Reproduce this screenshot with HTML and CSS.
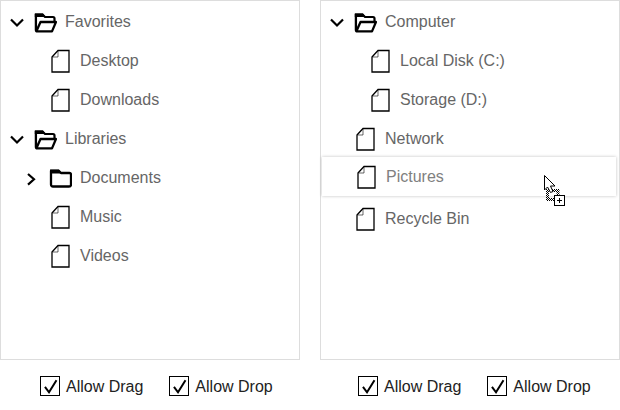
FILE: index.html
```html
<!DOCTYPE html>
<html>
<head>
  <meta charset="UTF-8">
  <title>Tree drag and drop</title>
  <link rel="stylesheet" href="styles.css">
</head>
<body>
  <svg class="defs" width="0" height="0">
    <symbol id="i-chevron-down" viewBox="0 0 16 16">
      <path d="M3 5.5 L9 11.5 L15 5.5" fill="none" stroke="#000" stroke-width="2.2"/>
    </symbol>
    <symbol id="i-chevron-right" viewBox="0 0 16 16">
      <path d="M5 4 L11 9.3 L5 14.6" fill="none" stroke="#000" stroke-width="2.2"/>
    </symbol>
    <symbol id="i-open" viewBox="0 0 24 24">
      <path d="M2.8 5 H10 L12 7 H20 Q21.5 7 21.5 8.5 V11" fill="none" stroke="#000" stroke-width="2.2"/>
      <path d="M1.8 3.2 H10 L12.5 7 H1.8 Z" fill="#000"/>
      <path d="M2.9 4 V20 Q2.9 21.4 4.4 21.4 H19 L23 12 H7.5 L3.5 21" fill="none" stroke="#000" stroke-width="2.3" stroke-linejoin="round"/>
    </symbol>
    <symbol id="i-closed" viewBox="0 0 24 24">
      <path d="M3 5 H11 L13 7 H21.5 Q23 7 23 8.5 V18.5 Q23 20.5 21 20.5 H5 Q3 20.5 3 18.5 Z" fill="none" stroke="#000" stroke-width="2.3" stroke-linejoin="round"/>
      <path d="M2 3.5 H11 L13.5 7.5 H2 Z" fill="#000"/>
    </symbol>
    <symbol id="i-file" viewBox="0 0 24 24">
      <path d="M4 8 L10 1.5 H21 V23 H4 Z" fill="#fff" stroke="#000" stroke-width="1.3"/>
      <path d="M10 2 V8 H4.5" fill="none" stroke="#000" stroke-width="0.6"/>
    </symbol>
    <symbol id="i-check" viewBox="0 0 20 20">
      <path d="M4.4 11 L8.9 17 L17.2 3.5" fill="none" stroke="#000" stroke-width="2.2"/>
    </symbol>
    <pattern id="checker" width="2" height="2" patternUnits="userSpaceOnUse">
      <rect width="1" height="1" fill="#000"/>
      <rect x="1" y="1" width="1" height="1" fill="#000"/>
    </pattern>
  </svg>

  <div class="demo">
    <div class="column">
      <div class="panel">
        <div class="row">
          <svg class="toggle"><use href="#i-chevron-down"/></svg>
          <svg class="icon"><use href="#i-open"/></svg>
          <span class="label">Favorites</span>
        </div>
        <div class="row level-1">
          <span class="toggle"></span>
          <svg class="icon"><use href="#i-file"/></svg>
          <span class="label">Desktop</span>
        </div>
        <div class="row level-1">
          <span class="toggle"></span>
          <svg class="icon"><use href="#i-file"/></svg>
          <span class="label">Downloads</span>
        </div>
        <div class="row">
          <svg class="toggle"><use href="#i-chevron-down"/></svg>
          <svg class="icon"><use href="#i-open"/></svg>
          <span class="label">Libraries</span>
        </div>
        <div class="row level-1">
          <svg class="toggle"><use href="#i-chevron-right"/></svg>
          <svg class="icon"><use href="#i-closed"/></svg>
          <span class="label">Documents</span>
        </div>
        <div class="row level-1">
          <span class="toggle"></span>
          <svg class="icon"><use href="#i-file"/></svg>
          <span class="label">Music</span>
        </div>
        <div class="row level-1">
          <span class="toggle"></span>
          <svg class="icon"><use href="#i-file"/></svg>
          <span class="label">Videos</span>
        </div>
      </div>
      <div class="options">
        <label class="option"><span class="box"><svg class="tick"><use href="#i-check"/></svg></span>Allow Drag</label>
        <label class="option"><span class="box"><svg class="tick"><use href="#i-check"/></svg></span>Allow Drop</label>
      </div>
    </div>

    <div class="column">
      <div class="panel">
        <div class="row">
          <svg class="toggle"><use href="#i-chevron-down"/></svg>
          <svg class="icon"><use href="#i-open"/></svg>
          <span class="label">Computer</span>
        </div>
        <div class="row level-1">
          <span class="toggle"></span>
          <svg class="icon"><use href="#i-file"/></svg>
          <span class="label">Local Disk (C:)</span>
        </div>
        <div class="row level-1">
          <span class="toggle"></span>
          <svg class="icon"><use href="#i-file"/></svg>
          <span class="label">Storage (D:)</span>
        </div>
        <div class="row">
          <span class="toggle"></span>
          <svg class="icon"><use href="#i-file"/></svg>
          <span class="label">Network</span>
        </div>
        <div class="drop-gap">
          <div class="row dragged">
            <span class="toggle"></span>
            <svg class="icon"><use href="#i-file"/></svg>
            <span class="label">Pictures</span>
          </div>
          <svg class="cursor" width="24" height="32" viewBox="0 0 24 32">
            <rect x="3.5" y="15.5" width="10.5" height="9" fill="none" stroke="url(#checker)" stroke-width="3"/>
            <path d="M0.5 0.5 V15 L3.5 12 L6.5 17.5 L9 16.5 L6.5 11 H11 Z" fill="#fff" stroke="#000"/>
            <rect x="10.5" y="20.5" width="10" height="10" fill="#fff" stroke="#000"/>
            <path d="M13 25.5 H18 M15.5 23 V28" stroke="#000"/>
          </svg>
        </div>
        <div class="row">
          <span class="toggle"></span>
          <svg class="icon"><use href="#i-file"/></svg>
          <span class="label">Recycle Bin</span>
        </div>
      </div>
      <div class="options options-right">
        <label class="option"><span class="box"><svg class="tick"><use href="#i-check"/></svg></span>Allow Drag</label>
        <label class="option"><span class="box"><svg class="tick"><use href="#i-check"/></svg></span>Allow Drop</label>
      </div>
    </div>
  </div>
</body>
</html>
```

FILE: styles.css
```css
body {
  margin: 0;
  background: #fff;
  font-family: "Liberation Sans", Arial, sans-serif;
  font-size: 16px;
}
.defs {
  position: absolute;
}
.demo {
  display: flex;
  gap: 20px;
  width: 620px;
}
.column {
  width: 300px;
}

/* tree */
.panel {
  box-sizing: border-box;
  height: 360px;
  padding-top: 1px;
  border: 1px solid #ddd;
  background: #fff;
}
.row {
  display: flex;
  align-items: center;
  height: 39px;
  padding-left: 7px;
  color: #666;
}
.level-1 {
  padding-left: 22px;
}
.toggle {
  width: 16px;
  height: 16px;
  flex: none;
}
.icon {
  width: 24px;
  height: 24px;
  margin-left: 9px;
  margin-right: 8px;
  flex: none;
}

/* row being dragged */
.drop-gap {
  position: relative;
  height: 41px;
}
.dragged {
  position: absolute;
  top: -1px;
  left: 1px;
  width: 294px;
  box-sizing: border-box;
  padding-left: 7px;
  background: #fff;
  box-shadow: 0 0 3px rgba(0, 0, 0, 0.25);
  color: #808080;
}
.cursor {
  position: absolute;
  top: 17px;
  left: 223px;
}

/* checkboxes */
.options {
  display: flex;
  gap: 26px;
  padding-top: 16px;
  padding-left: 40px;
}
.options-right {
  padding-left: 38px;
}
.option {
  display: flex;
  gap: 6px;
  line-height: 22px;
  color: #222;
}
.box {
  box-sizing: border-box;
  width: 20px;
  height: 20px;
  border: 1px solid #000;
  background: #fff;
}
.tick {
  display: block;
  width: 18px;
  height: 18px;
}
```
